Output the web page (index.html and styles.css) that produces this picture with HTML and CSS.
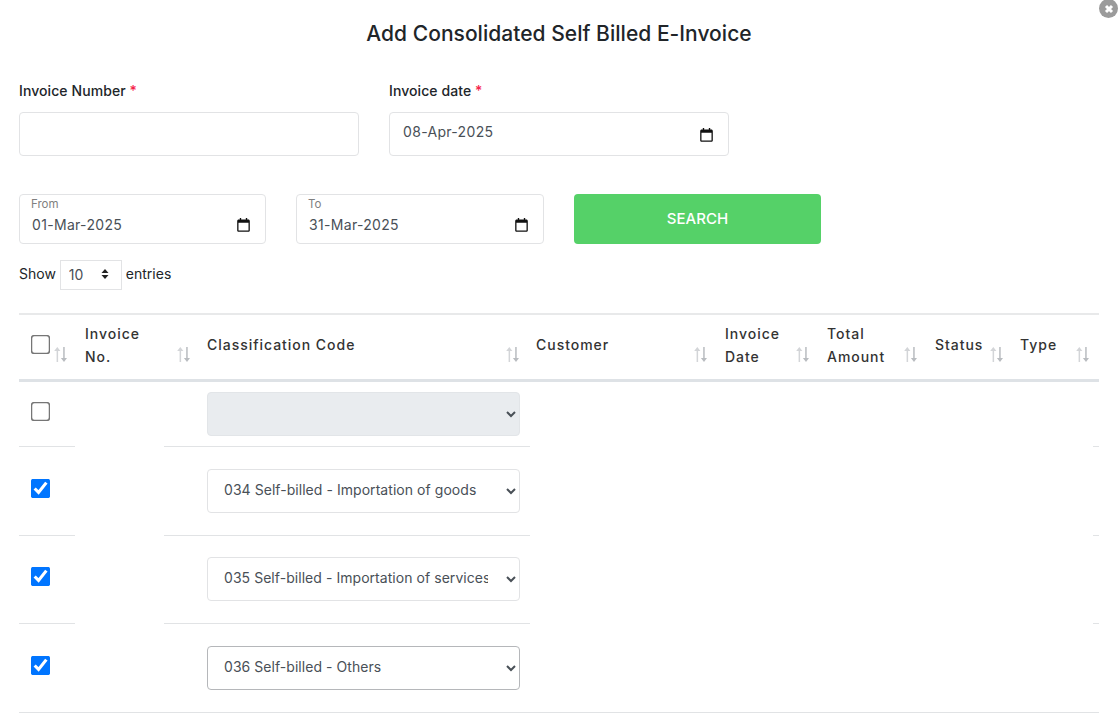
FILE: index.html
```html
<!DOCTYPE html>
<html lang="en">
<head>
<meta charset="utf-8">
<title>Add Consolidated Self Billed E-Invoice</title>
<link rel="stylesheet" href="styles.css">
</head>
<body>
<svg class="defs" aria-hidden="true" width="0" height="0">
  <symbol id="cal" viewBox="0 0 14 15">
    <path fill="#111" fill-rule="evenodd" d="M3 0h1.500v1.500h5V0H11v1.500h1.200c.9 0 1.600.7 1.600 1.600v10.200c0 .9-.7 1.600-1.600 1.600H1.800C.9 14.900.2 14.200.2 13.300V3.100c0-.9.7-1.600 1.600-1.600H3V0zM1.600 5v8.200c0 .2.1.3.3.3h10.200c.2 0 .3-.1.3-.3V5H1.600z"/>
  </symbol>
  <symbol id="sort" viewBox="0 0 14 15">
    <path fill="#d3d5d8" d="M3.300 0 6.400 4H4.100v11H2.600V4H.2z"/>
    <path fill="#b9bcc0" d="M9.200 0h1.500v11H13l-3 4-3.100-4h2.300z"/>
  </symbol>
</svg>
<div class="close" aria-label="Close">
  <svg width="10" height="10" viewBox="0 0 10 10"><path d="M2 2l6 6M8 2l-6 6" stroke="#fff" stroke-width="3"/></svg>
</div>
<main class="modal">
  <h1 class="title">Add Consolidated Self Billed E-Invoice</h1>

  <div class="row-top">
    <div class="field">
      <label class="label">Invoice Number <span class="req">*</span></label>
      <input class="box-input" type="text">
    </div>
    <div class="field">
      <label class="label">Invoice date <span class="req">*</span></label>
      <div class="date-box">
        <input class="date-value" type="text" value="08-Apr-2025">
        <svg class="cal"><use href="#cal"/></svg>
      </div>
    </div>
  </div>

  <div class="row-filter">
    <div class="range">
      <span class="range-label">From</span>
      <div class="range-line">
        <input class="date-value" type="text" value="01-Mar-2025">
        <svg class="cal"><use href="#cal"/></svg>
      </div>
    </div>
    <div class="range">
      <span class="range-label">To</span>
      <div class="range-line">
        <input class="date-value" type="text" value="31-Mar-2025">
        <svg class="cal"><use href="#cal"/></svg>
      </div>
    </div>
    <button class="search" type="button">SEARCH</button>
  </div>

  <div class="length">
    <span>Show</span>
    <span class="length-wrap">
      <select class="length-select"><option>10</option></select>
      <svg class="updown" width="8" height="10" viewBox="0 0 8 10"><path fill="#222" d="M4 0l3.500 4H.5zM4 10L.5 6h7z"/></svg>
    </span>
    <span>entries</span>
  </div>

  <div class="thead">
    <div class="th"><input class="check" type="checkbox"><svg class="sort"><use href="#sort"/></svg></div>
    <div class="th th-tight"><span>Invoice<br>No.</span><svg class="sort"><use href="#sort"/></svg></div>
    <div class="th th-tight"><span class="one">Classification Code</span><svg class="sort"><use href="#sort"/></svg></div>
    <div class="th"><span class="one">Customer</span><svg class="sort"><use href="#sort"/></svg></div>
    <div class="th"><span>Invoice<br>Date</span><svg class="sort"><use href="#sort"/></svg></div>
    <div class="th"><span>Total<br>Amount</span><svg class="sort"><use href="#sort"/></svg></div>
    <div class="th th-tight"><span class="one">Status</span><svg class="sort"><use href="#sort"/></svg></div>
    <div class="th th-last"><span class="one">Type</span><svg class="sort"><use href="#sort"/></svg></div>
  </div>

  <div class="tbody">
    <div class="td td-check"><input class="check" type="checkbox"></div>
    <div class="td-blank"></div>
    <div class="td td-select"><select class="code" disabled><option></option></select></div>
    <div class="td-blank"></div>
    <div class="td"></div>

    <div class="td td-check"><input class="check" type="checkbox" checked></div>
    <div class="td-blank"></div>
    <div class="td td-select"><select class="code"><option>034 Self-billed - Importation of goods</option></select></div>
    <div class="td-blank"></div>
    <div class="td"></div>

    <div class="td td-check"><input class="check" type="checkbox" checked></div>
    <div class="td-blank"></div>
    <div class="td td-select td-up"><select class="code"><option>035 Self-billed - Importation of services</option></select></div>
    <div class="td-blank"></div>
    <div class="td"></div>

    <div class="td td-check"><input class="check" type="checkbox" checked></div>
    <div class="td td-blank"></div>
    <div class="td td-select"><select class="code code-focus"><option>036 Self-billed - Others</option></select></div>
    <div class="td td-blank"></div>
    <div class="td"></div>
  </div>
</main>
</body>
</html>
```
FILE: styles.css
```css
* { box-sizing: border-box; }
html, body { margin: 0; height: 100%; overflow: hidden; background: #fff; }
body { font-family: Inter, "Liberation Sans", sans-serif; color: #212529; position: relative; }
.defs { position: absolute; }

.close {
  position: absolute; top: -1px; right: 0; width: 19px; height: 19px;
  background: #9b9b9b; border-radius: 50%;
  display: flex; align-items: center; justify-content: center;
}

.modal { padding: 0 19px; }
.title {
  margin: 0; padding-top: 20px; height: 81px;
  font-size: 21px; line-height: 28px; font-weight: 500; text-align: center; color: #212529;
  letter-spacing: .03px;
}

.row-top { display: grid; grid-template-columns: 340px 340px; column-gap: 30px; }
.label { display: block; height: 31px; font-size: 14px; line-height: 20px; font-weight: 500; letter-spacing: .08px; color: #212529; }
.req { color: #f5234a; }
.box-input, .date-box {
  display: flex; align-items: center; width: 340px; height: 44px;
  border: 1px solid #e2e3e5; border-radius: 4px; background: #fff;
}
.date-box { padding: 0 15px 0 13px; justify-content: space-between; }
.date-value {
  border: 0; padding: 0; margin: 0; outline: 0; background: transparent; width: 120px;
  font: 400 14px/20px Inter, "Liberation Sans", sans-serif; letter-spacing: .32px; color: #495057;
}
.date-box .date-value { margin-top: -4px; }
.cal { width: 13px; height: 14px; flex: none; margin-top: 1px; }

.row-filter {
  display: grid; grid-template-columns: 247px 248px 247px; column-gap: 30px;
  margin-top: 38px; height: 50px;
}
.range { border: 1px solid #e2e3e5; border-radius: 4px; padding: 2px 15px 0 11px; }
.range-label { display: block; font-size: 11.5px; line-height: 14px; color: #808080; }
.range-line { display: flex; align-items: center; justify-content: space-between; padding-left: 1px; height: 21px; margin-top: 3px; }
.search {
  border: 0; border-radius: 4px; background: #55d168; color: #fff; padding: 0 0 1px;
  font: 500 15px/20px Inter, "Liberation Sans", sans-serif;
}

.length {
  display: flex; align-items: center; gap: 4px; margin-top: 16px; height: 30px;
  font-size: 14px; color: #212529;
}
.length > span:first-child, .length > span:last-child { margin-top: -3px; }
.length-wrap { position: relative; display: block; width: 62px; height: 30px; }
.length-select {
  appearance: none; width: 62px; height: 30px; border: 1px solid #e2e3e5; border-radius: 0;
  background: #fff; padding: 0 0 2px 8px; color: #495057;
  font: 400 14px Inter, "Liberation Sans", sans-serif;
}
.updown { position: absolute; right: 13px; top: 9px; }

.thead {
  display: grid; grid-template-columns: 56px 122px 329px 189px 102px 108px 85px 89px;
  margin-top: 23px; height: 69px;
  border-top: 2px solid #e8e9ea; border-bottom: 3px solid #dee2e6;
}
.th {
  display: flex; justify-content: space-between; align-items: center;
  padding: 0 7px 0 10px; font-size: 14px; line-height: 23px; font-weight: 500; letter-spacing: .97px; color: #333;
}
.th:first-child { padding: 0 7px 0 12px; }
.th-tight { padding-right: 6px; }
.th-last { padding-right: 9px; }
.th > span { margin-top: -4px; }
.th > span.one { margin-top: -6px; }
.sort { width: 14px; height: 15px; flex: none; margin-top: 14px; }
.th:first-child .sort { margin-left: 3px; }
.th:first-child .check { margin-top: 3px; margin-bottom: 9px; }

.check { width: 13px; height: 13px; margin: 3px; flex: none; transform: scale(1.5); }

.tbody {
  display: grid; grid-template-columns: 56px 89px 366px 563px 6px;
  grid-template-rows: 65px 89px 88px 89px;
}
.td { border-bottom: 1px solid #e1e3e5; }
.td-check { padding: 0 0 0 12px; display: flex; align-items: center; }
.td-check .check { margin-top: -3px; }
.td-select { padding: 0 10px 0 43px; display: flex; align-items: center; }
.td-up { padding-bottom: 1px; }
.code {
  width: 313px; height: 44px; border: 1px solid #e2e3e5; border-radius: 4px; background: #fff;
  padding: 0 15px 4px 12px; color: #495057; opacity: 1; letter-spacing: .05px;
  font: 400 14px/20px Inter, "Liberation Sans", sans-serif;
}
.code:disabled { background: #e9ecef; border-color: #e2e5e8; }
.code-focus { border-color: #b5b7ba; }
```
